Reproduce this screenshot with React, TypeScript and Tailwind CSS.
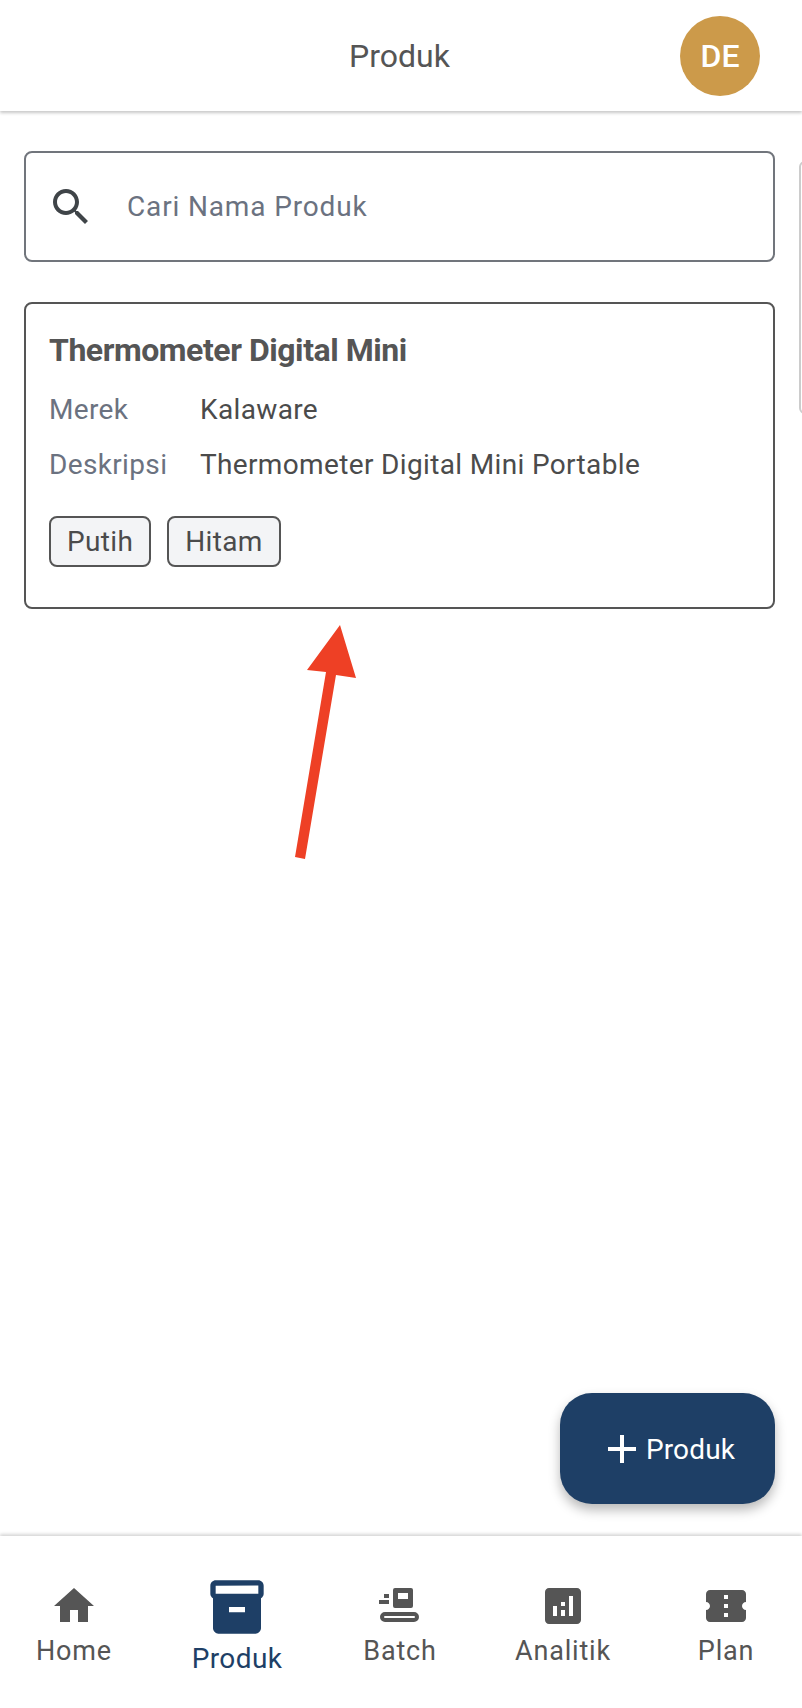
import React from "react";

function NavIcon({ path, className }: { path: string; className: string }) {
    return (
        <svg viewBox="0 0 24 24" className={className} fill="currentColor">
            <path d={path} />
        </svg>
    );
}

const homePath = "M10 20v-6h4v6h5v-8h3L12 3 2 12h3v8z";
const boxPath = "M20 2H4c-1 0-2 .9-2 2v3.01c0 .72.43 1.34 1 1.69V20c0 1.1 1.1 2 2 2h14c.9 0 2-.9 2-2V8.7c.57-.35 1-.97 1-1.69V4c0-1.1-1-2-2-2zm-5 12H9v-2h6v2zm5-7H4V4l16-.02V7z";
const analyticsPath = "M19 3H5c-1.1 0-2 .9-2 2v14c0 1.1.9 2 2 2h14c1.1 0 2-.9 2-2V5c0-1.1-.9-2-2-2zM9 17H7v-5h2v5zm4 0h-2v-3h2v3zm0-5h-2v-2h2v2zm4 5h-2V7h2v10z";
const ticketPath = "M22 10V6c0-1.11-.9-2-2-2H4c-1.1 0-1.99.89-1.99 2v4c1.1 0 1.99.9 1.99 2s-.89 2-2 2v4c0 1.1.9 2 2 2h16c1.1 0 2-.9 2-2v-4c-1.1 0-2-.9-2-2s.9-2 2-2zm-9 7.5h-2v-2h2v2zm0-4.5h-2v-2h2v2zm0-4.5h-2v-2h2v2z";
const searchPath = "M15.5 14h-.79l-.28-.27C15.41 12.59 16 11.11 16 9.5 16 5.91 13.09 3 9.5 3S3 5.91 3 9.5 5.91 16 9.5 16c1.61 0 3.09-.59 4.23-1.57l.27.28v.79l5 4.99L20.49 19l-4.99-5zm-6 0C7.01 14 5 11.99 5 9.5S7.01 5 9.5 5 14 7.01 14 9.5 11.99 14 9.5 14z";

function BatchIcon() {
    return (
        <svg viewBox="0 0 48 48" className="w-12 h-12" fill="currentColor">
            <path fillRule="evenodd" d="M19 6h16a2 2 0 0 1 2 2v16a2 2 0 0 1-2 2H19a2 2 0 0 1-2-2V8a2 2 0 0 1 2-2zm3 5v6h10v-6z" />
            <rect x="8" y="12" width="5" height="4" />
            <rect x="3" y="18" width="10" height="4" />
            <rect x="6" y="32" width="35" height="6" rx="3" fill="none" stroke="currentColor" strokeWidth="4" />
        </svg>
    );
}

function NavItem({ label, children }: { label: string; children: React.ReactNode }) {
    return (
        <div className="w-[163px] shrink-0 flex flex-col items-center pt-[46px] text-[#555555]">
            {children}
            <span className="mt-[3px] text-[27px] leading-[36px] tracking-[0.8px]">{label}</span>
        </div>
    );
}

function Chip({ label }: { label: string }) {
    return (
        <span className="h-[51px] px-4 flex items-center rounded-lg border-2 border-[#555555] bg-[#f3f4f6] text-[28px] tracking-[0.35px] text-[#4b4b4b]">
            {label}
        </span>
    );
}

function InfoRow({ label, value, className }: { label: string; value: string; className: string }) {
    return (
        <div className={`flex items-center h-[36px] text-[28px] tracking-[0.35px] ${className}`}>
            <span className="w-[151px] text-[#6b7280]">{label}</span>
            <span className="text-[#4b4b4b]">{value}</span>
        </div>
    );
}

export default function App() {
    return (
        <div className="relative w-full h-[1708px] flex flex-col overflow-hidden bg-white font-['Roboto',sans-serif]">
            <header className="relative h-[111px] shrink-0 flex items-center justify-center pr-[3px] bg-white shadow-[0_2px_3px_rgba(0,0,0,0.22)]">
                <span className="text-[32px] text-[#555555]">Produk</span>
                <div className="absolute right-[42px] top-4 w-20 h-20 rounded-full bg-[#cc9a4a] flex items-center justify-center text-white text-[32px] font-medium">
                    DE
                </div>
            </header>

            <main className="flex-1 flex flex-col gap-[40px] pt-[40px] pl-6 pr-[27px]">
                <div className="h-[111px] flex items-center pl-[21px] rounded-lg border-2 border-[#71757c] bg-white">
                    <NavIcon path={searchPath} className="w-12 h-12 text-[#3f4448]" />
                    <span className="ml-[32px] text-[28px] tracking-[0.85px] text-[#6b7280]">Cari Nama Produk</span>
                </div>

                <div className="h-[307px] flex flex-col rounded-lg border-2 border-[#555555] pl-[23px] pt-[26px]">
                    <h2 className="text-[32px] leading-[40px] font-bold tracking-[-0.45px] text-[#555555]">Thermometer Digital Mini</h2>
                    <InfoRow label="Merek" value="Kalaware" className="mt-[22px]" />
                    <InfoRow label="Deskripsi" value="Thermometer Digital Mini Portable" className="mt-[19px]" />
                    <div className="mt-[33px] flex gap-4">
                        <Chip label="Putih" />
                        <Chip label="Hitam" />
                    </div>
                </div>
            </main>

            <nav className="h-[172px] shrink-0 flex justify-center pr-[2px] bg-white shadow-[0_-2px_3px_rgba(0,0,0,0.16)]">
                <NavItem label="Home">
                    <NavIcon path={homePath} className="w-12 h-12" />
                </NavItem>
                <div className="w-[163px] shrink-0 flex flex-col items-center pt-[39px] text-[#1e3f66]">
                    <NavIcon path={boxPath} className="w-16 h-16" />
                    <span className="mt-[2px] text-[28px] leading-[36px] tracking-[0.4px]">Produk</span>
                </div>
                <NavItem label="Batch">
                    <BatchIcon />
                </NavItem>
                <NavItem label="Analitik">
                    <NavIcon path={analyticsPath} className="w-12 h-12" />
                </NavItem>
                <NavItem label="Plan">
                    <NavIcon path={ticketPath} className="w-12 h-12" />
                </NavItem>
            </nav>

            <div className="absolute left-[799px] top-[161px] w-6 h-[253px] rounded-l-md border-2 border-[#cccccc]" />

            <button className="absolute left-[560px] top-[1393px] w-[215px] h-[111px] pl-[8px] rounded-[32px] bg-[#1e3f66] flex items-center justify-center gap-[10px] text-white text-[28px] tracking-[0.15px] shadow-[0_6px_12px_rgba(0,0,0,0.28)]">
                <svg viewBox="0 0 28 28" className="w-7 h-7" fill="currentColor">
                    <rect x="0" y="12" width="28" height="4" />
                    <rect x="12" y="0" width="4" height="28" />
                </svg>
                <span className="pt-[3px]">Produk</span>
            </button>

            <svg className="absolute left-[290px] top-[620px] w-[72px] h-[245px]" viewBox="290 620 72 245">
                <polygon fill="#ee4025" points="340,625 356,678 336,675 305,859 295,857 326,672 307,670" />
            </svg>
        </div>
    );
}
